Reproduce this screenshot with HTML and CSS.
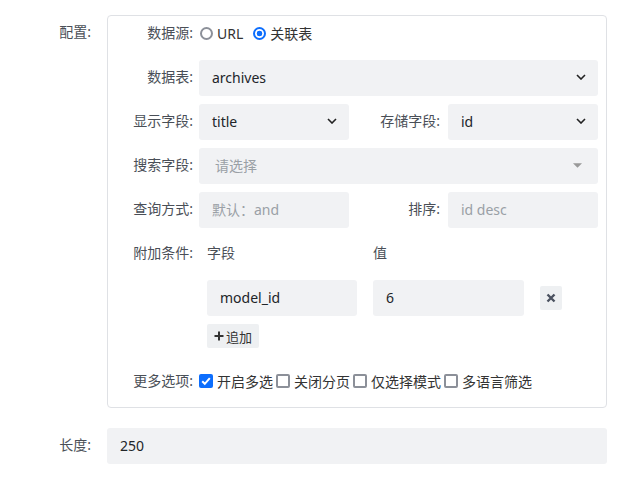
FILE: index.html
```html
<!DOCTYPE html>
<html lang="zh">
<head>
<meta charset="utf-8">
<link rel="stylesheet" href="styles.css">
</head>
<body>
<div class="form">
  <div class="outer-label">配置:</div>
  <div class="card">
    <div class="row">
      <div class="lbl">数据源:</div>
      <div class="inline">
        <span class="radio"></span><span class="opt">URL</span>
        <span class="radio on"></span><span class="opt">关联表</span>
      </div>
    </div>
    <div class="row">
      <div class="lbl">数据表:</div>
      <div class="field select"><span>archives</span><svg class="chev" viewBox="0 0 10 6"><path d="M1 1l4 4 4-4" fill="none" stroke="#222" stroke-width="1.6"/></svg></div>
    </div>
    <div class="row">
      <div class="lbl">显示字段:</div>
      <div class="split">
        <div class="field select"><span>title</span><svg class="chev" viewBox="0 0 10 6"><path d="M1 1l4 4 4-4" fill="none" stroke="#222" stroke-width="1.6"/></svg></div>
        <div class="lbl2">存储字段:</div>
        <div class="field select"><span>id</span><svg class="chev" viewBox="0 0 10 6"><path d="M1 1l4 4 4-4" fill="none" stroke="#222" stroke-width="1.6"/></svg></div>
      </div>
    </div>
    <div class="row">
      <div class="lbl">搜索字段:</div>
      <div class="field select ph wide-pad"><span>请选择</span><svg class="tri" viewBox="0 0 10 5"><path d="M0 0h10L5 5z" fill="#999"/></svg></div>
    </div>
    <div class="row">
      <div class="lbl">查询方式:</div>
      <div class="split">
        <div class="field ph"><span>默认：and</span></div>
        <div class="lbl2">排序:</div>
        <div class="field ph"><span>id desc</span></div>
      </div>
    </div>
    <div class="row cond">
      <div class="lbl">附加条件:</div>
      <div class="cond-grid">
        <div class="head">字段</div>
        <div class="head">值</div>
        <div></div>
        <div class="field"><span>model_id</span></div>
        <div class="field"><span>6</span></div>
        <div class="del"><svg viewBox="0 0 10 10"><path d="M1.5 1.5l7 7M8.5 1.5l-7 7" stroke="#4b5260" stroke-width="2.4"/></svg></div>
        <div class="add"><svg viewBox="0 0 10 10"><path d="M5 0.5v9M0.5 5h9" stroke="#333" stroke-width="2"/></svg>追加</div>
      </div>
    </div>
    <div class="row">
      <div class="lbl">更多选项:</div>
      <div class="inline checks">
        <span class="check on"><svg viewBox="0 0 14 14"><path d="M3.2 7.2l2.6 2.6 5-5.6" fill="none" stroke="#fff" stroke-width="2"/></svg></span><span class="opt">开启多选</span>
        <span class="check"></span><span class="opt">关闭分页</span>
        <span class="check"></span><span class="opt">仅选择模式</span>
        <span class="check"></span><span class="opt">多语言筛选</span>
      </div>
    </div>
  </div>
  <div class="outer-label">长度:</div>
  <div class="field"><span>250</span></div>
</div>
</body>
</html>
```
FILE: styles.css
```css
* { box-sizing: border-box; }
body {
  margin: 0;
  background: #fff;
  font-family: "Noto Sans", "Noto Sans CJK SC", sans-serif;
  font-size: 14px;
  color: #212529;
}
.form {
  display: grid;
  grid-template-columns: 91px 500px;
  column-gap: 16px;
  row-gap: 20px;
  padding-top: 15px;
}
.outer-label {
  text-align: right;
  color: #4a4f57;
  height: 36px;
  line-height: 34px;
}
.card {
  border: 1px solid #dfe1e5;
  border-radius: 4px;
  padding: 0 8px 7px 0;
  display: flex;
  flex-direction: column;
  gap: 8px;
}
.row {
  display: grid;
  grid-template-columns: 85px 1fr;
  column-gap: 6px;
  min-height: 36px;
}
.lbl {
  text-align: right;
  color: #4a4f57;
  height: 36px;
  line-height: 34px;
  white-space: nowrap;
}
.lbl2 {
  text-align: right;
  color: #4a4f57;
  line-height: 34px;
  padding-right: 8px;
  white-space: nowrap;
}
.inline {
  display: flex;
  align-items: center;
  height: 34px;
}
.opt { margin-left: 4px; margin-right: 6px; color: #333; }
.checks .opt { margin-left: 4px; margin-right: 3px; }
.field {
  height: 36px;
  background: #f1f2f4;
  border-radius: 3px;
  display: flex;
  align-items: center;
  padding: 0 12px 2px 13px;
  color: #212529;
}
.field span { flex: 1; }
.field.ph { color: #9aa0a6; }
.field.wide-pad { padding-left: 16px; padding-right: 16px; }
.chev { width: 10px; height: 6px; }
.tri { width: 9px; height: 5px; }
.split {
  display: grid;
  grid-template-columns: 150px 1fr 150px;
}
.radio {
  width: 13px;
  height: 13px;
  border-radius: 50%;
  border: 2px solid #8c9099;
  display: inline-block;
  margin-left: 1px;
}
.radio.on {
  border: 2px solid #0d6efd;
  background: radial-gradient(circle, #0d6efd 0 2.6px, #fff 3.1px);
  margin-left: 4px;
}
.check {
  width: 14px;
  height: 14px;
  border-radius: 2px;
  border: 2px solid #8c9099;
  display: inline-block;
}
.check.on {
  background: #0d6efd;
  border: none;
}
.check svg { display: block; width: 14px; height: 14px; }
.cond-grid {
  display: grid;
  grid-template-columns: 150px 151px 22px;
  column-gap: 16px;
  row-gap: 8px;
  padding-left: 8px;
  align-items: center;
  margin-bottom: 8px;
}
.head { height: 36px; line-height: 34px; color: #4a4f57; }
.del {
  width: 22px;
  height: 24px;
  background: #eef0f2;
  border-radius: 2px;
  display: flex;
  align-items: center;
  justify-content: center;
}
.del svg { width: 10px; height: 10px; }
.add {
  grid-column: 1;
  justify-self: start;
  width: 52px;
  height: 24px;
  background: #eef0f2;
  border-radius: 2px;
  font-size: 13px;
  color: #333;
  display: flex;
  align-items: center;
  justify-content: center;
  gap: 2px;
}
.add svg { width: 10px; height: 10px; }
```
